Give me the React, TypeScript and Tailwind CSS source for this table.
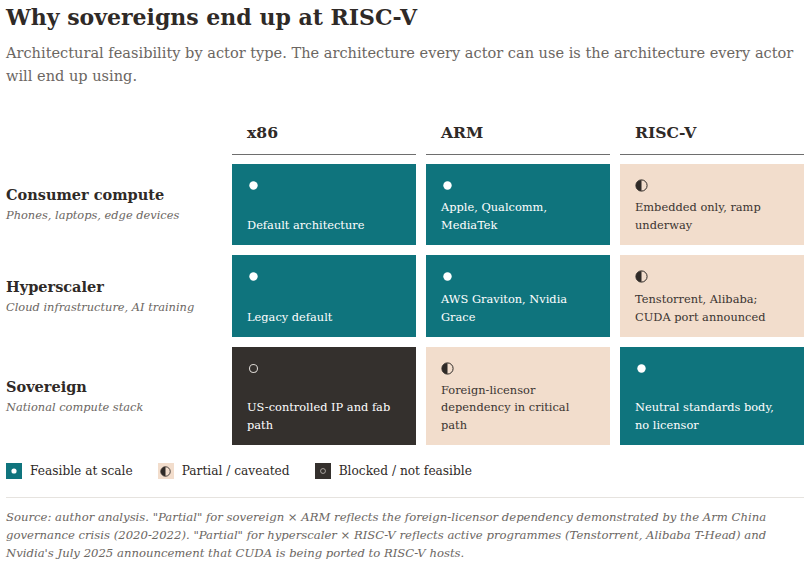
import type { ReactNode } from "react";

type Kind = "full" | "partial" | "blocked";

const columns = ["x86", "ARM", "RISC-V"];

const rows: { title: string; sub: string; h: string; cells: { kind: Kind; text: ReactNode }[] }[] = [
  {
    title: "Consumer compute",
    sub: "Phones, laptops, edge devices",
    h: "h-[81px]",
    cells: [
      { kind: "full", text: "Default architecture" },
      { kind: "full", text: <>Apple, Qualcomm,<br />MediaTek</> },
      { kind: "partial", text: <>Embedded only, ramp<br />underway</> },
    ],
  },
  {
    title: "Hyperscaler",
    sub: "Cloud infrastructure, AI training",
    h: "h-[82px]",
    cells: [
      { kind: "full", text: "Legacy default" },
      { kind: "full", text: <>AWS Graviton, Nvidia<br />Grace</> },
      { kind: "partial", text: <>Tenstorrent, Alibaba;<br />CUDA port announced</> },
    ],
  },
  {
    title: "Sovereign",
    sub: "National compute stack",
    h: "h-[98px]",
    cells: [
      { kind: "blocked", text: <>US-controlled IP and fab<br />path</> },
      { kind: "partial", text: <>Foreign-licensor<br />dependency in critical<br />path</> },
      { kind: "full", text: <>Neutral standards body,<br />no licensor</> },
    ],
  },
];

const cellStyle: Record<Kind, string> = {
  full: "bg-[#0f747d] text-white",
  partial: "bg-[#f2ddcc] text-[#3a3431]",
  blocked: "bg-[#34302d] text-white",
};

function Mark({ kind, size = 13 }: { kind: Kind; size?: number }) {
  if (kind === "full")
    return (
      <svg width={size} height={size} viewBox="0 0 13 13">
        <circle cx="6.5" cy="6.5" r="4.2" fill="#fff" />
      </svg>
    );
  if (kind === "partial")
    return (
      <svg width={size} height={size} viewBox="0 0 13 13">
        <circle cx="6.5" cy="6.5" r="5.6" fill="none" stroke="#2f2a27" strokeWidth="1" />
        <path d="M6.5 0.9 A5.6 5.6 0 0 0 6.5 12.1 Z" fill="#2f2a27" />
      </svg>
    );
  return (
    <svg width={size} height={size} viewBox="0 0 13 13">
      <circle cx="6.5" cy="6.5" r="4" fill="none" stroke="#d8d4d0" strokeWidth="1.1" />
    </svg>
  );
}

function LegendItem({ kind, label }: { kind: Kind; label: string }) {
  return (
    <div className="flex items-center gap-[8px]">
      <div className={`flex h-[16px] w-[16px] items-center justify-center ${cellStyle[kind]}`}>
        <Mark kind={kind} size={kind === "partial" ? 11 : 8} />
      </div>
      <span>{label}</span>
    </div>
  );
}

export default function App() {
  return (
    <div className="h-[565px] w-[810px] overflow-hidden bg-white px-[6px] font-['DejaVu_Serif',serif] text-[#2f2a27]">
      <h1 className="pt-[2px] text-[22px] font-bold leading-[30px]">Why sovereigns end up at RISC-V</h1>
      <p className="mt-[9px] whitespace-nowrap text-[14.55px] leading-[23px] text-[#6b6662]">
        Architectural feasibility by actor type. The architecture every actor can use is the architecture every actor
        <br />
        will end up using.
      </p>

      <div className="mt-[35px] grid grid-cols-[216px_184px_184px_184px] gap-x-[10px] gap-y-[10px]">
        <div />
        {columns.map((c) => (
          <div key={c} className="-mb-px border-b-[1.5px] border-[#6e6e6e] pb-[10px] pl-[15px] text-[15.6px] font-bold leading-[22px]">
            {c}
          </div>
        ))}

        {rows.map((r) => (
          <Row key={r.title} row={r} />
        ))}
      </div>

      <div className="mt-[16px] flex items-center gap-[25px] text-[12.2px] leading-[20px] text-[#2f2a27]">
        <LegendItem kind="full" label="Feasible at scale" />
        <LegendItem kind="partial" label="Partial / caveated" />
        <LegendItem kind="blocked" label="Blocked / not feasible" />
      </div>

      <div className="mt-[16px] whitespace-nowrap border-t-[1.5px] border-[#e6e3df] pt-[10px] text-[11.65px] italic leading-[18px] text-[#6b6662]">
        Source: author analysis. "Partial" for sovereign × ARM reflects the foreign-licensor dependency demonstrated by the Arm China
        <br />
        governance crisis (2020-2022). "Partial" for hyperscaler × RISC-V reflects active programmes (Tenstorrent, Alibaba T-Head) and
        <br />
        Nvidia's July 2025 announcement that CUDA is being ported to RISC-V hosts.
      </div>
    </div>
  );
}

function Row({ row }: { row: (typeof rows)[number] }) {
  return (
    <>
      <div className={`flex flex-col justify-center ${row.h}`}>
        <div className="text-[14.5px] font-bold leading-[21px]">{row.title}</div>
        <div className="text-[11.4px] italic leading-[20px] text-[#6b6662]">{row.sub}</div>
      </div>
      {row.cells.map((c, i) => (
        <div key={i} className={`flex flex-col justify-between px-[15px] pb-[11px] pt-[15px] ${row.h} ${cellStyle[c.kind]}`}>
          <Mark kind={c.kind} />
          <div className="whitespace-nowrap text-[11.4px] leading-[17.5px]">{c.text}</div>
        </div>
      ))}
    </>
  );
}
